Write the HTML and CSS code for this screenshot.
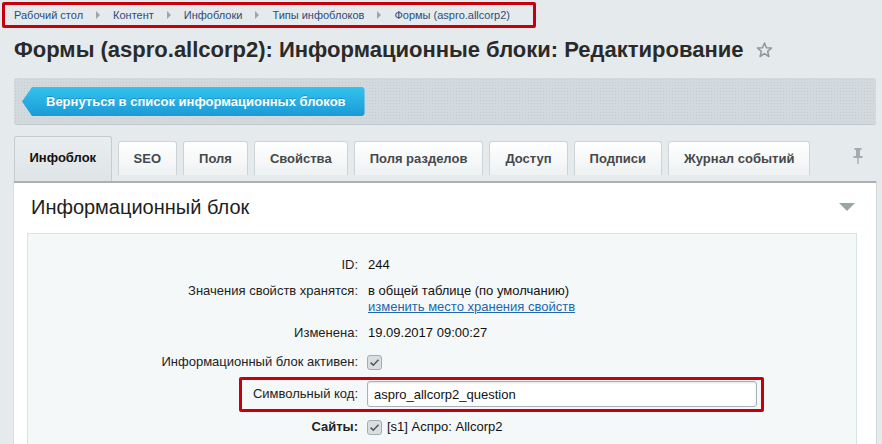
FILE: index.html
```html
<!DOCTYPE html>
<html lang="ru">
<head>
<meta charset="utf-8">
<title>Формы (aspro.allcorp2): Информационные блоки: Редактирование</title>
<link rel="stylesheet" href="styles.css">
</head>
<body>
<nav class="crumbs">
  <a class="crumb">Рабочий стол</a><span class="sep"></span>
  <a class="crumb">Контент</a><span class="sep"></span>
  <a class="crumb">Инфоблоки</a><span class="sep"></span>
  <a class="crumb">Типы инфоблоков</a><span class="sep"></span>
  <a class="crumb">Формы (aspro.allcorp2)</a>
</nav>
<h1 class="title">Формы (aspro.allcorp2): Информационные блоки: Редактирование<svg class="star" width="17" height="16" viewBox="0 0 17 16"><path d="M8.5 1 L10.4 5.7 L15.6 6 L11.6 9.3 L12.9 14.5 L8.5 11.6 L4.1 14.5 L5.4 9.3 L1.4 6 L6.6 5.7 Z" fill="none" stroke="#8e979c" stroke-width="1.5" stroke-linejoin="round"/></svg></h1>
<div class="toolbar">
  <a class="back">Вернуться в список информационных блоков</a>
</div>
<div class="tabs">
  <span class="tab active">Инфоблок</span>
  <span class="tab">SEO</span>
  <span class="tab">Поля</span>
  <span class="tab">Свойства</span>
  <span class="tab">Поля разделов</span>
  <span class="tab">Доступ</span>
  <span class="tab">Подписи</span>
  <span class="tab">Журнал событий</span>
  <span class="pin"><svg width="10" height="16" viewBox="0 0 10 16"><rect x="1.5" y="0" width="7" height="2" fill="#a2abb0"/><rect x="3" y="2" width="4" height="6" fill="#a2abb0"/><rect x="0.5" y="8" width="9" height="2" fill="#a2abb0"/><rect x="4.3" y="10" width="1.4" height="6" fill="#a2abb0"/></svg></span>
</div>
<div class="panel">
  <div class="panel-head">
    <h2 class="panel-title">Информационный блок</h2>
    <span class="collapse"></span>
  </div>
  <div class="form">
    <div class="row">
      <div class="label">ID:</div>
      <div class="value">244</div>
    </div>
    <div class="row">
      <div class="label">Значения свойств хранятся:</div>
      <div class="value">в общей таблице (по умолчанию)<br><a class="link">изменить место хранения свойств</a></div>
    </div>
    <div class="row">
      <div class="label">Изменена:</div>
      <div class="value">19.09.2017 09:00:27</div>
    </div>
    <div class="row row-check">
      <div class="label">Информационный блок активен:</div>
      <div class="value"><svg class="cb" width="15" height="15" viewBox="0 0 15 15"><rect x="0.5" y="0.5" width="14" height="14" rx="2.5" fill="#d9dee1" stroke="#a4acb0"/><path d="M3.6 7.6 L6.3 10.2 L11.5 4.8" fill="none" stroke="#535b60" stroke-width="1.6"/></svg></div>
    </div>
    <div class="row row-input">
      <div class="label">Символьный код:</div>
      <div class="value"><input class="field" type="text" value="aspro_allcorp2_question"></div>
      <span class="mark"></span>
    </div>
    <div class="row row-sites">
      <div class="label bold">Сайты:</div>
      <div class="value"><svg class="cb" width="15" height="15" viewBox="0 0 15 15"><rect x="0.5" y="0.5" width="14" height="14" rx="2.5" fill="#d9dee1" stroke="#a4acb0"/><path d="M3.6 7.6 L6.3 10.2 L11.5 4.8" fill="none" stroke="#535b60" stroke-width="1.6"/></svg><span class="site">[s1] Аспро: Allcorp2</span></div>
    </div>
  </div>
</div>
</body>
</html>
```
FILE: styles.css
```css
html, body {
  margin: 0;
  padding: 0;
}
body {
  background: #e5eaec;
  font-family: "Liberation Sans", Arial, sans-serif;
  color: #222;
  height: 444px;
  overflow: hidden;
}

.crumbs {
  display: inline-flex;
  align-items: center;
  margin: 2px 0 0 2px;
  height: 26px;
  box-sizing: border-box;
  border: 3px solid #c3000c;
  border-radius: 2px;
  padding: 0 23px 0 9px;
  font-size: 11px;
}
.crumb {
  color: #2d4d7c;
  white-space: nowrap;
}
.sep {
  width: 0;
  height: 0;
  border-top: 4px solid transparent;
  border-bottom: 4px solid transparent;
  border-left: 4px solid #9ea6ab;
  margin: 0 13px 0 13px;
}

.title {
  margin: 10px 0 16px 0;
  padding-left: 14px;
  font-size: 22px;
  line-height: 24px;
  font-weight: bold;
  color: #2a2a2a;
  display: flex;
  align-items: center;
  white-space: nowrap;
}
.star {
  margin-left: 12px;
  margin-top: -1px;
}

.toolbar {
  margin: 0 6px 0 14px;
  height: 47px;
  box-sizing: border-box;
  padding: 9px 8px;
  border-radius: 3px;
  background-color: #d2dade;
  background-image: radial-gradient(circle, #c3cdd1 0.8px, transparent 1px);
  background-size: 3px 3px;
  box-shadow: inset 0 -1px 0 #bfc9cd;
}
.back {
  display: inline-flex;
  align-items: center;
  height: 29px;
  box-sizing: border-box;
  padding: 0 19px 0 24px;
  color: #fff;
  font-size: 13px;
  font-weight: bold;
  background: linear-gradient(#33c3ee, #1b9ad6);
  clip-path: polygon(10px 0, calc(100% - 2px) 0, 100% 2px, 100% calc(100% - 2px), calc(100% - 2px) 100%, 10px 100%, 0 50%);
  text-shadow: 0 -1px 0 rgba(0, 80, 130, 0.35);
}

.tabs {
  display: flex;
  align-items: flex-start;
  gap: 6px;
  margin: 11px 6px 0 14px;
  height: 45px;
}
.tab {
  height: 34px;
  box-sizing: border-box;
  margin-top: 5px;
  padding: 0 15px;
  display: flex;
  align-items: center;
  font-size: 13px;
  font-weight: bold;
  color: #45494c;
  background: linear-gradient(#ffffff, #eef2f3);
  border: 1px solid #cdd4d7;
  border-bottom: none;
  border-radius: 3px 3px 0 0;
  white-space: nowrap;
}
.tab.active {
  height: 45px;
  margin-top: 0;
  padding: 0 14.5px 4px 14.5px;
  color: #111;
  background: linear-gradient(#e9edef, #dfe5e7);
  border-color: #c4ccd0;
}
.pin {
  margin-left: auto;
  margin-right: 13px;
  margin-top: 12px;
  display: flex;
}

.panel {
  margin: 0 6px 0 14px;
  background: #fff;
  border-top: 2px solid #a7b1b6;
  box-shadow: 1px 0 0 #cfd7da, -1px 0 0 #d7dfe2;
  height: 261px;
  overflow: hidden;
}
.panel-head {
  display: flex;
  align-items: center;
  padding: 12px 21px 0 17px;
}
.panel-title {
  margin: 0;
  font-size: 20px;
  line-height: 24px;
  font-weight: normal;
  color: #1e1e1e;
}
.collapse {
  margin-left: auto;
  width: 0;
  height: 0;
  border-left: 8px solid transparent;
  border-right: 8px solid transparent;
  border-top: 8px solid #9ba4a9;
}

.form {
  margin: 14px 19px 0 13px;
  background: #f5f8f9;
  border: 1px solid #dae2e5;
  border-bottom: none;
  padding-top: 18px;
  height: 211px;
  box-sizing: border-box;
  font-size: 13px;
  line-height: 16px;
}
.row {
  display: flex;
  padding: 5px 0;
  position: relative;
}
.label {
  width: 330px;
  flex-shrink: 0;
  text-align: right;
  color: #222;
}
.label.bold {
  font-weight: bold;
}
.value {
  margin-left: 10px;
  color: #111;
}
.link {
  color: #2067b0;
  text-decoration: underline;
}
.row-check {
  padding: 8px 0;
}
.cb {
  display: block;
  margin-top: 1px;
  margin-left: -1px;
}
.row-input {
  padding: 3px 0;
  align-items: center;
}
.row-input .value {
  margin-left: 9px;
}
.field {
  display: block;
  width: 390px;
  height: 26px;
  box-sizing: border-box;
  border: 1px solid #a9b1b6;
  border-radius: 3px;
  padding: 0 6px;
  font-family: "Liberation Sans", Arial, sans-serif;
  font-size: 13px;
  color: #111;
  background: #fff;
  box-shadow: inset 0 1px 2px rgba(0, 0, 0, 0.12);
}
.mark {
  position: absolute;
  left: 211px;
  top: -1px;
  width: 525px;
  height: 35px;
  box-sizing: border-box;
  border: 3px solid #c3000c;
  border-radius: 2px;
  pointer-events: none;
}
.row-sites {
  padding: 9px 0 5px;
}
.row-sites .value {
  display: flex;
  align-items: center;
}
.site {
  margin-left: 5px;
}
```
